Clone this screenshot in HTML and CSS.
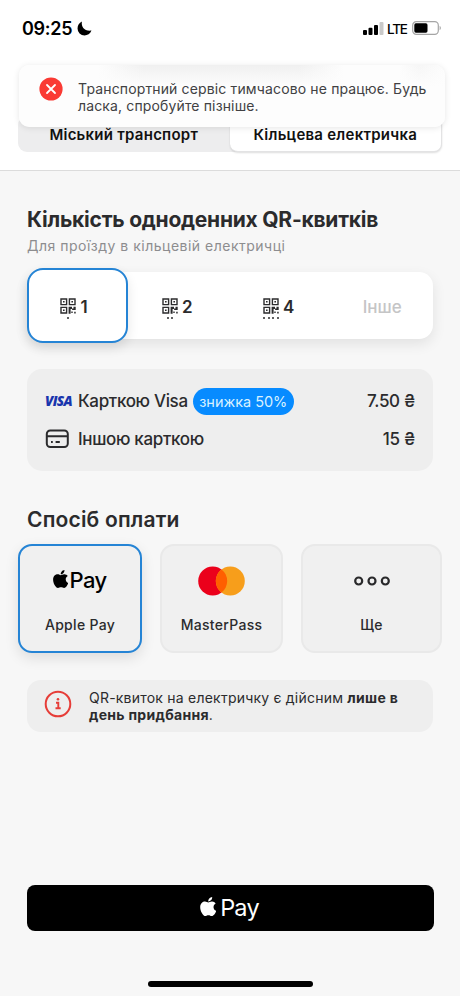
FILE: index.html
```html
<!DOCTYPE html>
<html lang="uk">
<head>
<meta charset="utf-8">
<title>QR-квитки</title>
<link rel="stylesheet" href="styles.css">
</head>
<body>
<svg class="defs" width="0" height="0" aria-hidden="true">
  <symbol id="apple" viewBox="4 32 368 448"><path d="M318.7 268.7c-.2-36.7 16.4-64.4 50-84.8-18.8-26.9-47.2-41.7-84.7-44.6-35.5-2.8-74.3 20.7-88.5 20.7-15 0-49.4-19.7-76.4-19.7C63.3 141.2 4 184.8 4 273.5q0 39.3 14.4 81.2c12.8 36.7 59 126.7 107.2 125.2 25.2-.6 43-17.9 75.8-17.9 31.8 0 48.3 17.9 76.4 17.9 48.6-.7 90.4-82.5 102.6-119.3-65.2-30.7-61.7-90-61.7-91.9zm-56.6-164.2c27.3-32.4 24.8-61.9 24-72.5-24.1 1.4-52 16.4-67.9 34.9-17.5 19.8-27.8 44.3-25.6 71.9 26.1 2 49.9-11.4 69.5-34.3z"/></symbol>
  <symbol id="qr" viewBox="0 0 16 16">
    <path fill="none" stroke="currentColor" stroke-width="1.400" d="M1 1h5.600v5.600H1zM9.400 1H15v5.600H9.400zM1 9.400h5.600V15H1z"/>
    <path fill="currentColor" d="M3 3h1.600v1.600H3zM11.400 3H13v1.600h-1.600zM3 11.400h1.600V13H3zM8.600 8.700h3.400v1.800h1.500V8.700h2.200v3.400h-3.600v-1.100h-1.500v4.700H8.600zM11.300 13.600h1.400V15h-1.400zM14.200 13.800h1.500v1.800h-1.500z"/>
  </symbol>
</svg>
<div class="screen">
  <header class="header">
    <div class="status">
      <span class="time">09:25</span>
      <svg class="moon" viewBox="0 0 14 14"><path d="M4.600.5C3.700 5.600 6.900 9.700 13.500 8.900 12.300 12 9.800 13.500 7 13.500A6.500 6.500 0 0 1 .5 7C.5 4 2.100 1.600 4.600.5z"/></svg>
      <svg class="signal" viewBox="0 0 21 13"><rect x="0" y="8" width="4" height="5" rx="1"/><rect x="5.500" y="5.700" width="4" height="7.300" rx="1"/><rect x="11" y="3" width="4" height="10" rx="1"/><rect x="16.500" y="0" width="4" height="13" rx="1" fill="#c9c9c9"/></svg>
      <span class="lte">LTE</span>
      <svg class="battery" viewBox="0 0 30 14"><rect x=".7" y=".7" width="25.600" height="12.600" rx="3.600" fill="none" stroke="#a5a5a5" stroke-width="1.200"/><rect x="2.300" y="2.300" width="13.200" height="9.400" rx="1.600"/><path d="M27.600 4.800c1.700.7 1.700 3.700 0 4.400z" fill="#a5a5a5"/></svg>
    </div>
    <nav class="tabs">
      <span class="tab">Міський транспорт</span>
      <span class="tab tab-on">Кільцева електричка</span>
    </nav>
    <div class="toast">
      <svg class="toast-icon" viewBox="0 0 24 24"><circle cx="12" cy="12" r="11.600" fill="#fa3a34"/><path d="M8 8l8 8M16 8l-8 8" stroke="#fff" stroke-width="1.800" stroke-linecap="round"/></svg>
      <p class="toast-text">Транспортний сервіс тимчасово не працює. Будь<br>ласка, спробуйте пізніше.</p>
    </div>
  </header>
  <main class="content">
    <h1 class="title">Кількість одноденних QR-квитків</h1>
    <p class="subtitle">Для проїзду в кільцевій електричці</p>
    <div class="counts">
      <div class="count count-on"><span class="qr"><svg><use href="#qr"/></svg><span class="dots"><i></i></span></span>1</div>
      <div class="count"><span class="qr"><svg><use href="#qr"/></svg><span class="dots"><i></i><i></i></span></span>2</div>
      <div class="count"><span class="qr"><svg><use href="#qr"/></svg><span class="dots"><i></i><i></i><i></i><i></i></span></span>4</div>
      <div class="count count-other">Інше</div>
    </div>
    <section class="prices">
      <div class="price">
        <span class="brand"><span class="visa">VISA</span></span>
        <span class="label">Карткою Visa</span><span class="pill">знижка 50%</span><span class="sum">7.50 ₴</span>
      </div>
      <div class="price">
        <span class="brand"><svg class="card" viewBox="0 0 24 20" fill="none" stroke="#2b2b2d" stroke-width="2"><rect x="1.800" y="1.500" width="21" height="16.500" rx="3.500"/><path d="M1.800 7.300h21M6 13h1.800M10.600 13h4.200"/></svg></span>
        <span class="label">Іншою карткою</span><span class="sum">15 ₴</span>
      </div>
    </section>
    <h2 class="pay-title">Спосіб оплати</h2>
    <div class="methods">
      <div class="method method-on"><div class="logo apple-pay"><svg><use href="#apple"/></svg><span>Pay</span></div><span class="name">Apple Pay</span></div>
      <div class="method"><div class="logo"><svg class="mc" viewBox="0 0 47 30"><circle cx="14.700" cy="15" r="14.500" fill="#eb001b"/><circle cx="32.300" cy="15" r="14.500" fill="#f79e1b"/><path d="M23.500 3.500a14.500 14.500 0 0 1 0 23 14.500 14.500 0 0 1 0-23z" fill="#ff5f00"/></svg></div><span class="name">MasterPass</span></div>
      <div class="method"><div class="logo"><svg class="more" viewBox="0 0 36 10" fill="none" stroke="#29292b" stroke-width="2.200"><circle cx="4.700" cy="5" r="3.500"/><circle cx="18" cy="5" r="3.500"/><circle cx="31.300" cy="5" r="3.500"/></svg></div><span class="name">Ще</span></div>
    </div>
    <div class="note">
      <svg class="note-icon" viewBox="0 0 28 28" fill="none" stroke="#e63d38"><circle cx="14" cy="14" r="12.300" stroke-width="2"/><path d="M12 12.800h2.300v5M11.500 18.200h5.200" stroke-width="1.900"/><circle cx="14" cy="9.300" r="1.300" fill="#e63d38" stroke="none"/></svg>
      <p class="note-text">QR-квиток на електричку є дійсним <b>лише в<br>день придбання</b>.</p>
    </div>
    <div class="buy"><svg><use href="#apple"/></svg><span>Pay</span></div>
    <div class="home"></div>
  </main>
</div>
</body>
</html>
```
FILE: styles.css
```css
* { box-sizing: border-box; }
body, h1, h2, p { margin: 0; }
body { font-family: Inter, "Noto Sans", sans-serif; color: #2b2b2d; background: #f7f7f7; }
.defs { position: absolute; }
.screen { width: 460px; height: 996px; background: #f7f7f7; display: flex; flex-direction: column; overflow: hidden; }

.header { position: relative; height: 171px; flex: none; background: #fff; border-bottom: 1px solid #dcdcdc; }
.status { display: flex; align-items: center; height: 56px; padding: 0 18px 0 22px; color: #000; }
.time { font-size: 18px; font-weight: 600; letter-spacing: -.3px; }
.moon { width: 15px; height: 15px; margin-left: 5px; }
.signal { width: 21px; height: 13px; margin-left: auto; }
.lte { font-size: 13.500px; font-weight: 500; margin: 1px 5px 0 3px; letter-spacing: -1.200px; width: 20px; }
.battery { width: 30px; height: 14px; }
.tabs { display: flex; height: 36px; margin: 60px 18px 0; background: #ededee; border-radius: 9px; }
.tab { flex: 1; display: flex; justify-content: center; font-size: 15px; line-height: 37px; font-weight: 600; letter-spacing: .25px; color: #111; }
.tab-on { background: #fff; border-radius: 8px; border: solid #e3e3e4; border-width: 0 1px 1px 0; box-shadow: 0 1px 2px #0002; }
.toast { position: absolute; left: 19px; top: 65px; width: 426px; height: 62px; border-radius: 10px; padding: 12px 0 0 20px; display: flex; box-shadow: 0 1px 6px #0000001a; background: linear-gradient(#fff0, #fdfdfd 22px), linear-gradient(90deg, #fdfdfd 80px, #f0f0f0 125px 280px, #fdfdfd 325px 380px, #f6f6f6 400px, #fcfcfc 425px); }
.toast-icon { width: 24px; height: 24px; margin-right: 15px; }
.toast-text { font-size: 14px; line-height: 17px; letter-spacing: .14px; padding-top: 3px; color: #414143; white-space: nowrap; }

.content { flex: 1; display: flex; flex-direction: column; padding: 36px 27px 0; }
.title, .pay-title { font-size: 21px; line-height: 26px; white-space: nowrap; }
.title { font-weight: 700; letter-spacing: -.24px; }
.subtitle { font-size: 14px; line-height: 18px; letter-spacing: .5px; margin-top: 4px; color: #8d8d8f; white-space: nowrap; }
.counts { display: grid; grid-template-columns: repeat(4, 1fr); height: 67px; margin-top: 17px; background: #fff; border-radius: 14px; box-shadow: 0 5px 14px #00000017; }
.count { display: flex; align-items: center; justify-content: center; gap: 4px; font-size: 17px; font-weight: 600; padding-top: 3px; padding-right: 4px; }
.count-on { margin: -4px 0; margin-right: .5px; padding-right: 7px; border: 2px solid #2584d5; border-radius: 16px; background: #fff; box-shadow: 0 5px 12px #0000001a; }
.count-other { color: #c5c5c6; font-weight: 500; padding-right: 0; }
.qr { width: 16px; height: 22px; margin-top: 3px; }
.qr svg { display: block; width: 16px; height: 16px; }
.dots { display: flex; justify-content: center; gap: 2.600px; margin-top: 3px; }
.dots i { width: 2px; height: 2px; background: #2b2b2d; border-radius: 1px; }
.prices { margin-top: 30px; height: 102px; padding: 13px 18px 0; background: #eee; border-radius: 15px; }
.price { display: flex; align-items: center; height: 38px; font-size: 17px; font-weight: 500; letter-spacing: -.33px; white-space: nowrap; }
.brand { width: 33px; display: flex; }
.visa { font: italic 800 13.500px "Open Sans", sans-serif; color: #1935ad; letter-spacing: -.7px; }
.card { width: 24px; height: 20px; }
.pill { margin-left: 5px; width: 101px; height: 27px; border-radius: 14px; background: #078bff; color: #d8f1ff; font-size: 14.500px; letter-spacing: -.03px; line-height: 27px; text-align: center; font-weight: 400; }
.sum { margin-left: auto; }
.pay-title { margin-top: 36px; font-weight: 600; letter-spacing: .18px; }
.methods { display: grid; grid-template-columns: 124px 123px 141px; gap: 18px; margin: 11px -9px 0; height: 109px; }
.method { display: flex; flex-direction: column; align-items: center; background: #f0f0f0; border: 2px solid #e9e9e9; border-radius: 14px; padding-top: 18px; }
.method-on { border-color: #2584d5; box-shadow: 0 5px 14px #0000001c; }
.logo { height: 34px; display: flex; align-items: center; }
.mc { width: 47px; height: 30px; margin-right: 1px; }
.more { width: 36px; height: 10px; }
.name { font-size: 14px; line-height: 20px; margin-top: 17px; font-weight: 500; letter-spacing: .3px; }
.apple-pay { color: #000; font-size: 22px; font-weight: 500; letter-spacing: -.6px; padding-bottom: 2px; }
.apple-pay svg { width: 15px; height: 18px; margin: -2px 1px 0 0; }
.note { display: flex; height: 52px; margin-top: 27px; background: #eee; border-radius: 14px; padding: 9px 17px; }
.note-icon { width: 28px; height: 28px; margin: 1px 17px 0 0; }
.note-text { font-size: 14px; line-height: 17px; letter-spacing: .22px; white-space: nowrap; }
.note-text b { letter-spacing: .3px; }
.buy { display: flex; align-items: center; justify-content: center; height: 46.500px; margin: 152.500px -.5px 0; border-radius: 8px; background: #000; color: #fff; font-size: 23.500px; letter-spacing: -.8px; padding-right: 1px; }
.buy svg { width: 16px; height: 19px; margin: -3px 4px 0 0; fill: #fff; }
.home { width: 165px; height: 6px; margin: 50px auto 0; border-radius: 3px; background: #000; }
```
